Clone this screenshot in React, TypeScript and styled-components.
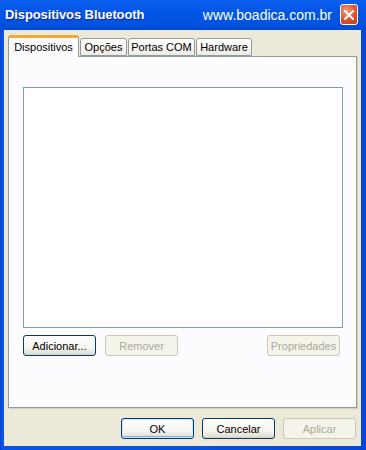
import React from "react";
import styled, { createGlobalStyle } from "styled-components";

const GlobalStyle = createGlobalStyle`
  html, body {
    margin: 0;
    padding: 0;
    background: #ffffff;
  }
  * {
    box-sizing: border-box;
  }
  body {
    font-family: "Liberation Sans", Arial, sans-serif;
    font-size: 11px;
  }
`;

const Window = styled.div`
  width: 366px;
  height: 450px;
  display: flex;
  flex-direction: column;
  background: linear-gradient(to right, #0a3fd0 0, #0855e6 2px, #0652df 50%, #0845d4 100%);
  overflow: hidden;
`;

const TitleBar = styled.div`
  height: 30px;
  flex: none;
  display: flex;
  align-items: center;
  padding: 0 8px 1px 5px;
  background: linear-gradient(
    to bottom,
    #0a5fee 0,
    #0859e9 20%,
    #0255e4 50%,
    #0153de 80%,
    #0349d4 100%
  );
`;

const Title = styled.span`
  color: #ffffff;
  font-weight: bold;
  font-size: 13px;
  letter-spacing: -0.1px;
  text-shadow: 1px 1px 0 #0b2a92;
`;

const Watermark = styled.span`
  margin-left: auto;
  margin-right: 8px;
  color: #ffffff;
  font-size: 14px;
`;

const CloseButton = styled.div`
  width: 18px;
  height: 21px;
  border: 1px solid #ffffff;
  border-radius: 3px;
  display: flex;
  align-items: center;
  justify-content: center;
  background: radial-gradient(circle at 35% 30%, #f39a7f 0, #e0522c 55%, #c3391a 100%);
`;

const Client = styled.div`
  flex: 1;
  margin: 0 5px 4px 4px;
  background: #ece9d8;
  padding: 5px 4px 7px 4px;
  display: flex;
  flex-direction: column;
`;

const TabStrip = styled.div`
  height: 21px;
  display: flex;
  align-items: flex-end;
  gap: 1px;
  position: relative;
  z-index: 1;
`;

const Tab = styled.div<{ $active?: boolean; $w: number }>`
  height: ${(p) => (p.$active ? "22px" : "18px")};
  margin-bottom: ${(p) => (p.$active ? "-1px" : "0")};
  width: ${(p) => p.$w}px;
  display: flex;
  align-items: center;
  justify-content: center;
  color: #000000;
  border: 1px solid #919b9c;
  border-bottom: ${(p) => (p.$active ? "none" : "1px solid #919b9c")};
  border-top: ${(p) => (p.$active ? "3px solid #f3a838" : "1px solid #919b9c")};
  border-radius: 3px 3px 0 0;
  padding-bottom: ${(p) => (p.$active ? "2px" : "0")};
  background: ${(p) =>
    p.$active
      ? "#fcfcfe"
      : "linear-gradient(to bottom, #ffffff 0, #f7f6f1 50%, #ecebe5 100%)"};
`;

const Panel = styled.div`
  width: 349px;
  height: 352px;
  border: 1px solid #919b9c;
  background: #fcfcfe;
  box-shadow: 1px 1px 0 #d2cfbf;
  padding: 30px 13px 0 14px;
  display: flex;
  flex-direction: column;
`;

const ListBox = styled.div`
  width: 320px;
  height: 241px;
  border: 1px solid #7f9db9;
  background: #ffffff;
`;

const ButtonRow = styled.div`
  display: flex;
  gap: 9px;
  margin-top: 7px;
  padding-right: 3px;
`;

const Footer = styled.div`
  display: flex;
  justify-content: flex-end;
  gap: 8px;
  margin-top: 10px;
  padding-right: 1px;
`;

const Button = styled.button<{ $isDefault?: boolean; $push?: boolean }>`
  width: 73px;
  height: 21px;
  padding: 0;
  margin-left: ${(p) => (p.$push ? "auto" : "0")};
  font-family: "Liberation Sans", Arial, sans-serif;
  font-size: 11px;
  color: #000000;
  border: 1px solid #003c74;
  border-radius: 3px;
  background: linear-gradient(to bottom, #ffffff 0, #f6f5f0 60%, #e3e1d7 90%, #d6d0c5 100%);
  box-shadow: ${(p) =>
    p.$isDefault ? "inset 0 0 0 1px #cee7ff, inset 0 -1px 0 1px #89ade4" : "none"};

  &:disabled {
    color: #aca899;
    border-color: #c9c7ba;
    background: #f5f4ea;
    box-shadow: none;
  }
`;

export default function App() {
  return (
    <Window>
      <GlobalStyle />
      <TitleBar>
        <Title>Dispositivos Bluetooth</Title>
        <Watermark>www.boadica.com.br</Watermark>
        <CloseButton>
          <svg width="10" height="10" viewBox="0 0 10 10">
            <path d="M1 1 L9 9 M9 1 L1 9" stroke="#ffffff" strokeWidth="2" strokeLinecap="square" />
          </svg>
        </CloseButton>
      </TitleBar>
      <Client>
        <TabStrip>
          <Tab $active $w={71}>Dispositivos</Tab>
          <Tab $w={47}>Opções</Tab>
          <Tab $w={67}>Portas COM</Tab>
          <Tab $w={56}>Hardware</Tab>
        </TabStrip>
        <Panel>
          <ListBox />
          <ButtonRow>
            <Button>Adicionar...</Button>
            <Button disabled>Remover</Button>
            <Button disabled $push>
              Propriedades
            </Button>
          </ButtonRow>
        </Panel>
        <Footer>
          <Button $isDefault>OK</Button>
          <Button>Cancelar</Button>
          <Button disabled>Aplicar</Button>
        </Footer>
      </Client>
    </Window>
  );
}
